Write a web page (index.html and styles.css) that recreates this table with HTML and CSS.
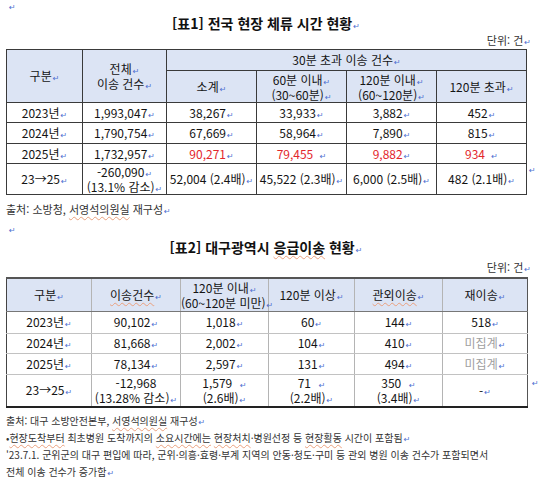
FILE: index.html
```html
<!DOCTYPE html>
<html lang="ko">
<head>
<meta charset="utf-8">
<link rel="stylesheet" href="styles.css">
</head>
<body>
<div class="page">
  <div class="mark-line"><span class="ret">↵</span></div>
  <h1 class="title">[표1] 전국 현장 체류 시간 현황<span class="ret">↵</span></h1>
  <p class="unit">단위: 건<span class="ret">↵</span></p>
  <div class="table-wrap">
    <table class="t1">
      <colgroup>
        <col class="c76"><col class="c84"><col class="c90"><col class="c90"><col class="c90"><col class="c90">
      </colgroup>
      <thead>
        <tr class="h21">
          <th rowspan="2">구분<span class="ret">↵</span></th>
          <th rowspan="2" class="two">전체<span class="ret">↵</span><br>이송 건수<span class="ret">↵</span></th>
          <th colspan="4">30분 초과 이송 건수<span class="ret">↵</span></th>
        </tr>
        <tr class="h32">
          <th>소계<span class="ret">↵</span></th>
          <th class="two">60분 이내<span class="ret">↵</span><br>(30~60분)<span class="ret">↵</span></th>
          <th class="two">120분 이내<span class="ret">↵</span><br>(60~120분)<span class="ret">↵</span></th>
          <th>120분 초과<span class="ret">↵</span></th>
        </tr>
      </thead>
      <tbody>
        <tr class="h20">
          <td>2023년<span class="ret">↵</span></td><td>1,993,047<span class="ret">↵</span></td><td>38,267<span class="ret">↵</span></td><td>33,933<span class="ret">↵</span></td><td>3,882<span class="ret">↵</span></td><td>452<span class="ret">↵</span></td>
        </tr>
        <tr class="h21">
          <td>2024년<span class="ret">↵</span></td><td>1,790,754<span class="ret">↵</span></td><td>67,669<span class="ret">↵</span></td><td>58,964<span class="ret">↵</span></td><td>7,890<span class="ret">↵</span></td><td>815<span class="ret">↵</span></td>
        </tr>
        <tr class="h20">
          <td>2025년<span class="ret">↵</span></td><td>1,732,957<span class="ret">↵</span></td><td class="red">90,271<span class="ret">↵</span></td><td class="red">79,455 &nbsp;<span class="ret">↵</span></td><td class="red">9,882<span class="ret">↵</span></td><td class="red">934 &nbsp;<span class="ret">↵</span></td>
        </tr>
        <tr class="h30">
          <td>23→25<span class="ret">↵</span></td>
          <td class="two">-260,090<span class="ret">↵</span><br>(13.1% 감소)<span class="ret">↵</span></td>
          <td>52,004 (2.4배)<span class="ret">↵</span></td>
          <td>45,522 (2.3배)<span class="ret">↵</span></td>
          <td>6,000 (2.5배)<span class="ret">↵</span></td>
          <td>482 (2.1배)<span class="ret">↵</span></td>
        </tr>
      </tbody>
    </table>
    <span class="ret side-ret">↵</span>
  </div>
  <p class="src">출처: 소방청, <span class="wavy">서영석의원실</span> 재구성<span class="ret">↵</span></p>
  <div class="mark-line2"><span class="ret">↵</span></div>
  <h1 class="title">[표2] 대구광역시 <span class="wavy">응급이송</span> 현황<span class="ret">↵</span></h1>
  <p class="unit unit2">단위: 건<span class="ret">↵</span></p>
  <div class="table-wrap">
    <table class="t2">
      <colgroup>
        <col class="c85"><col class="c89"><col class="c88"><col class="c86"><col class="c88"><col class="c85">
      </colgroup>
      <thead>
        <tr class="h33">
          <th>구분<span class="ret">↵</span></th>
          <th><span class="wavy">이송건수</span><span class="ret">↵</span></th>
          <th class="two">120분 이내<span class="ret">↵</span><br>(60~120분 미만)<span class="ret">↵</span></th>
          <th>120분 이상<span class="ret">↵</span></th>
          <th><span class="wavy">관외이송</span><span class="ret">↵</span></th>
          <th>재이송<span class="ret">↵</span></th>
        </tr>
      </thead>
      <tbody>
        <tr class="h22">
          <td>2023년<span class="ret">↵</span></td><td>90,102<span class="ret">↵</span></td><td>1,018<span class="ret">↵</span></td><td>60<span class="ret">↵</span></td><td>144<span class="ret">↵</span></td><td>518<span class="ret">↵</span></td>
        </tr>
        <tr class="h20">
          <td>2024년<span class="ret">↵</span></td><td>81,668<span class="ret">↵</span></td><td>2,002<span class="ret">↵</span></td><td>104<span class="ret">↵</span></td><td>410<span class="ret">↵</span></td><td class="gray">미집계<span class="ret">↵</span></td>
        </tr>
        <tr class="h21">
          <td>2025년<span class="ret">↵</span></td><td>78,134<span class="ret">↵</span></td><td>2,597<span class="ret">↵</span></td><td>131<span class="ret">↵</span></td><td>494<span class="ret">↵</span></td><td class="gray">미집계<span class="ret">↵</span></td>
        </tr>
        <tr class="h33">
          <td>23→25<span class="ret">↵</span></td>
          <td class="two">-12,968<br>(13.28% 감소)<span class="ret">↵</span></td>
          <td class="two">1,579 &nbsp;<span class="ret">↵</span><br>(2.6배)<span class="ret">↵</span></td>
          <td class="two">71 &nbsp;<span class="ret">↵</span><br>(2.2배)<span class="ret">↵</span></td>
          <td class="two">350 &nbsp;<span class="ret">↵</span><br>(3.4배)<span class="ret">↵</span></td>
          <td>-<span class="ret">↵</span></td>
        </tr>
      </tbody>
    </table>
    <span class="ret side-ret2">↵</span>
  </div>
  <div class="notes">
    <p>출처: 대구 소방안전본부, <span class="wavy">서영석의원실</span> 재구성<span class="ret">↵</span></p>
    <p>•<span class="wavy">현장도착부터</span> 최초병원 도착까지의 <span class="wavy">소요시간에는</span> <span class="wavy">현장처치</span>·병원선정 등 <span class="wavy">현장활동</span> 시간이 포함됨<span class="ret">↵</span></p>
    <p>'23.7.1. 군위군의 대구 편입에 따라, 군위·의흥·효령·부계 지역의 안동·청도·구미 등 관외 병원 이송 건수가 포함되면서</p>
    <p>전체 이송 건수가 증가함<span class="ret">↵</span></p>
  </div>
</div>
</body>
</html>
```

FILE: styles.css
```css
html, body {
  margin: 0;
  padding: 0;
  background: #ffffff;
}

body {
  font-family: "Noto Sans CJK KR", "Noto Sans", sans-serif;
  font-size: 12px;
  line-height: 14px;
  color: #141414;
}

.page {
  width: 550px;
  padding-left: 6px;
  box-sizing: border-box;
}

.ret {
  font-family: "DejaVu Sans", sans-serif;
  font-size: 8px;
  line-height: 1;
  color: #4d6fd1;
  font-weight: normal;
  margin-left: 1px;
}

.mark-line {
  height: 14px;
  line-height: 10px;
  padding-left: 2px;
}

.mark-line2 {
  height: 21px;
  line-height: 22px;
  padding-left: 2px;
}

.title {
  margin: 0;
  width: 520px;
  height: 18px;
  line-height: 18px;
  font-size: 14px;
  font-weight: bold;
  text-align: center;
  color: #111;
}

.unit {
  margin: 0;
  width: 525px;
  height: 17px;
  line-height: 17px;
  font-size: 11px;
  text-align: right;
  color: #333;
}

.unit2 {
  height: 21px;
  line-height: 22px;
}

.table-wrap {
  display: flex;
  align-items: flex-start;
}

table {
  border-collapse: collapse;
  table-layout: fixed;
}

th, td {
  padding: 0;
  text-align: center;
  vertical-align: middle;
  white-space: nowrap;
  font-weight: normal;
  line-height: 14px;
}

td.two, th.two {
  line-height: 15px;
}

th {
  background: #dce4f4;
}

.t1 { width: 520px; }
.t1 th, .t1 td { border: 1px solid #3a3a3a; }

.t2 { width: 521px; border-top: 2px solid #555; border-bottom: 2px solid #222; border-left: 1px solid #444; border-right: 1px solid #555; }
.t2 th, .t2 td { border-left: 1px solid #b4b4b4; border-right: 1px solid #b4b4b4; border-bottom: 1px solid #c2c2c2; }
.t2 th { border-bottom: 1px solid #777; }
.t2 tr td:first-child, .t2 tr th:first-child { border-left: 1px solid #444; }
.t2 tr td:last-child, .t2 tr th:last-child { border-right: 1px solid #555; }
.t2 tbody tr:last-child td { border-bottom: 2px solid #222; }

.c76 { width: 76px; }
.c84 { width: 84px; }
.c90 { width: 90px; }
.c85 { width: 85px; }
.c86 { width: 86px; }
.c88 { width: 88px; }
.c89 { width: 89px; }

.h20 { height: 20px; }
.h21 { height: 21px; }
.h22 { height: 22px; }
.h30 { height: 30px; }
.h32 { height: 32px; }
.h33 { height: 33px; }

.red { color: #e3262c; }
.gray { color: #a0a0a0; }

.side-ret {
  margin-top: 118px;
  margin-left: 2px;
}

.side-ret2 {
  margin-top: 103px;
  margin-left: 4px;
}

.src {
  margin: 6px 0 0 0;
  height: 16px;
  line-height: 16px;
  font-size: 11px;
  color: #333;
}

.wavy {
  text-decoration: underline wavy #eaa07e;
  text-decoration-thickness: 1px;
  text-underline-offset: 2px;
}

.notes {
  margin-top: 4px;
  font-size: 10px;
  color: #333;
}

.notes p {
  margin: 0;
  height: 17px;
  line-height: 17px;
  white-space: nowrap;
}
```
